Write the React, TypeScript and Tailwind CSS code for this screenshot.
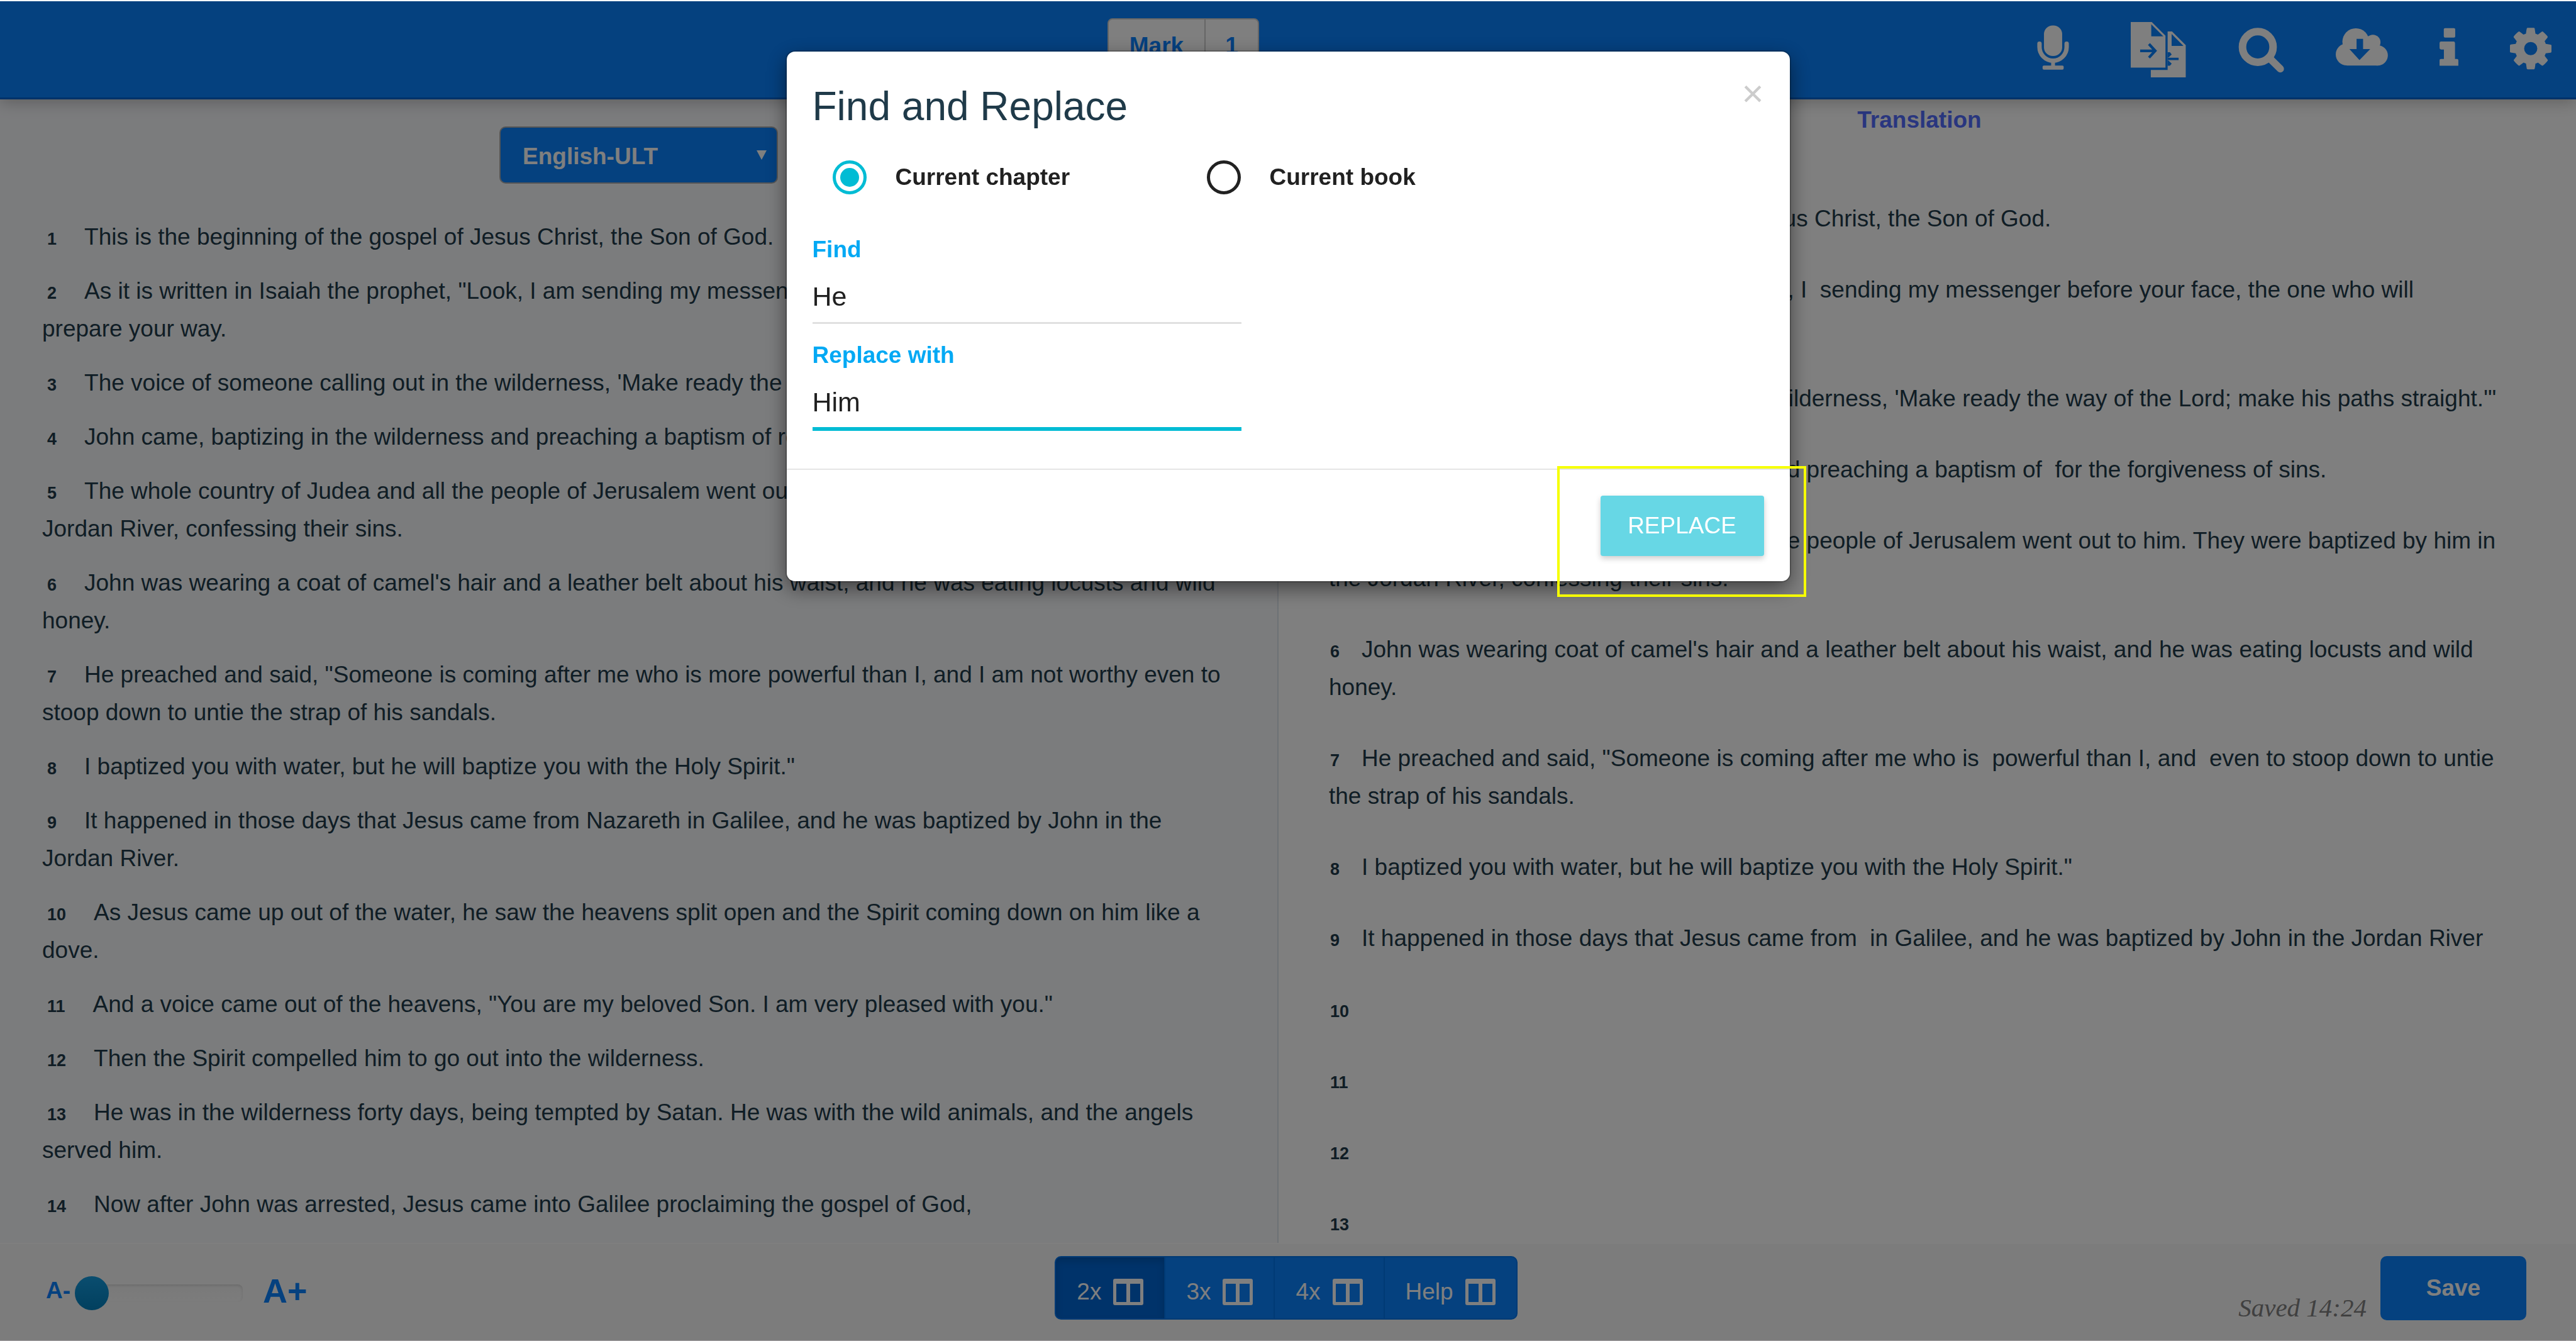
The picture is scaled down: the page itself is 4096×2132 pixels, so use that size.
import React from "react";

type Verse = { n: number; text: string };

const SOURCE: Verse[] = [
  { n: 1, text: "This is the beginning of the gospel of Jesus Christ, the Son of God." },
  { n: 2, text: "As it is written in Isaiah the prophet, \"Look, I am sending my messenger before your face, who will\nprepare your way." },
  { n: 3, text: "The voice of someone calling out in the wilderness, 'Make ready the way of the Lord; make his paths straight.'\"" },
  { n: 4, text: "John came, baptizing in the wilderness and preaching a baptism of repentance for the forgiveness of sins." },
  { n: 5, text: "The whole country of Judea and all the people of Jerusalem went out to him. They were baptized by him in the Jordan River, confessing their sins." },
  { n: 6, text: "John was wearing a coat of camel's hair and a leather belt about his waist, and he was eating locusts and wild honey." },
  { n: 7, text: "He preached and said, \"Someone is coming after me who is more powerful than I, and I am not worthy even to stoop down to untie the strap of his sandals." },
  { n: 8, text: "I baptized you with water, but he will baptize you with the Holy Spirit.\"" },
  { n: 9, text: "It happened in those days that Jesus came from Nazareth in Galilee, and he was baptized by John in the Jordan River." },
  { n: 10, text: "As Jesus came up out of the water, he saw the heavens split open and the Spirit coming down on him like a dove." },
  { n: 11, text: "And a voice came out of the heavens, \"You are my beloved Son. I am very pleased with you.\"" },
  { n: 12, text: "Then the Spirit compelled him to go out into the wilderness." },
  { n: 13, text: "He was in the wilderness forty days, being tempted by Satan. He was with the wild animals, and the angels served him." },
  { n: 14, text: "Now after John was arrested, Jesus came into Galilee proclaiming the gospel of God," },
];

const TARGET: Verse[] = [
  { n: 1, text: "This is the beginning of the gospel of Jesus Christ, the Son of God." },
  { n: 2, text: "As it is written in Isaiah the prophet \"Look, I  sending my messenger before your face, the one who will\nprepare your way." },
  { n: 3, text: "The voice of someone calling out in the wilderness, 'Make ready the way of the Lord; make his paths straight.'\"" },
  { n: 4, text: "John came baptizing in the wilderness and preaching a baptism of  for the forgiveness of sins." },
  { n: 5, text: "The whole country of Judea  and  all of the people of Jerusalem went out to him. They were baptized by him in\nthe Jordan River, confessing their sins." },
  { n: 6, text: "John was wearing coat of camel's hair and a leather belt about his waist, and he was eating locusts and wild\nhoney." },
  { n: 7, text: "He preached and said, \"Someone is coming after me who is  powerful than I, and  even to stoop down to untie\nthe strap of his sandals." },
  { n: 8, text: "I baptized you with water, but he will baptize you with the Holy Spirit.\"" },
  { n: 9, text: "It happened in those days that Jesus came from  in Galilee, and he was baptized by John in the Jordan River" },
  { n: 10, text: "" },
  { n: 11, text: "" },
  { n: 12, text: "" },
  { n: 13, text: "" },
];

function MicIcon() {
  return (
    <svg viewBox="75 102 300 525" className="h-[90px] w-[51px]" fill="currentColor" aria-hidden="true">
      <rect x="140" y="138" width="170" height="286" rx="82" />
      <path d="M98 308V340a127 127 0 0 0 254 0V308" fill="none" stroke="currentColor" strokeWidth="41" strokeLinecap="round" />
      <rect x="207" y="470" width="36" height="50" />
      <rect x="127" y="513" width="197" height="38" rx="12" />
    </svg>
  );
}

function ImportFilesIcon() {
  return (
    <svg viewBox="939 102 525 525" className="h-[90px] w-[90px]" aria-hidden="true">
      <path d="M1287 195H1328L1455 322V621H1131V552H1287Z" fill="currentColor" />
      <path d="M1324 218V329H1434Z" fill="#0a82ff" />
      <path d="M1287 388H1308L1325 408L1298 434L1287 438ZM1287 462L1298 468L1325 494L1308 513H1287Z" fill="#0a82ff" />
      <path d="M1287 450H1389" stroke="#0a82ff" strokeWidth="22" />
      <path d="M945 108H1140L1267 235V531H945Z" fill="currentColor" />
      <path d="M1135 128V240H1247Z" fill="#0a82ff" />
      <path d="M1032 375H1165M1114 312L1172 375L1114 438" fill="none" stroke="#0a82ff" strokeWidth="25" />
    </svg>
  );
}

function SearchIcon() {
  return (
    <svg viewBox="90 102 426 525" className="h-[90px] w-[73px]" fill="none" stroke="currentColor" aria-hidden="true">
      <circle cx="271" cy="339" r="142" strokeWidth="70" />
      <path d="M385 448L480 542" strokeWidth="68" strokeLinecap="round" />
    </svg>
  );
}

function CloudDownloadIcon() {
  return (
    <svg viewBox="1002 102 489 525" className="h-[90px] w-[83px]" fill="currentColor" aria-hidden="true">
      <circle cx="1105" cy="409" r="103" />
      <circle cx="1190" cy="290" r="126" />
      <circle cx="1350" cy="295" r="71" />
      <circle cx="1395" cy="418" r="95" />
      <rect x="1105" y="300" width="290" height="213" />
      <path d="M1197 263H1258V358H1325L1224 462L1130 358H1197Z" fill="#0a82ff" />
    </svg>
  );
}

function InfoIcon() {
  return (
    <svg viewBox="285 102 174 525" className="h-[90px] w-[30px]" fill="currentColor" aria-hidden="true">
      <rect x="324" y="164" width="106" height="88" rx="12" />
      <path d="M299 289H414q14 0 14 14V450H447q12 0 12 12V513H285V462q0-12 12-12H325V363H299q-14 0-14-14V303q0-14 14-14Z" />
    </svg>
  );
}

function CogIcon() {
  return (
    <svg viewBox="128 -108 1536 2090" className="h-[90px] w-[66px]" fill="currentColor" aria-hidden="true">
      <path d="M1140 896q0-101-72-172t-172-72-172 72-72 172 72 172 172 72 172-72 72-172zM1664 787v222q0 12-8 23t-20 13l-185 28q-19 54-39 91 35 50 107 138 10 12 10 25t-9 23q-27 37-99 108t-94 71q-12 0-26-9l-138-108q-44 23-91 38-16 136-29 186-7 28-36 28h-222q-14 0-24.500-8.500t-11.500-21.500l-28-184q-49-16-90-37l-141 107q-10 9-25 9-14 0-25-11-126-114-165-168-7-10-7-23 0-12 8-23 15-21 51-66.500t54-70.500q-27-50-41-99l-183-27q-13-2-21-12.500t-8-23.500v-222q0-12 8-23t19-13l186-28q14-46 39-92-40-57-107-138-10-12-10-24 0-10 9-23 26-36 98.500-107.500t94.500-71.500q13 0 26 10l138 107q44-23 91-38 16-136 29-186 7-28 36-28h222q14 0 24.500 8.500t11.500 21.500l28 184q49 16 90 37l142-107q9-9 24-9 13 0 25 10 129 119 165 170 7 8 7 22 0 12-8 23-15 21-51 66.500t-54 70.500q26 50 41 98l183 28q13 2 21 12.500t8 23.500z" />
    </svg>
  );
}

function ColumnsIcon() {
  return (
    <svg viewBox="0 0 48 42" className="h-[42px] w-[48px]" aria-hidden="true">
      <path
        fillRule="evenodd"
        fill="currentColor"
        d="M3 0H45Q48 0 48 3V39Q48 42 45 42H3Q0 42 0 39V3Q0 0 3 0ZM5 8V37H21V8ZM27 8V37H43V8Z"
      />
    </svg>
  );
}

function Header() {
  const actions = [
    { label: "Record", icon: <MicIcon />, cls: "mr-[15px]" },
    { label: "Import files", icon: <ImportFilesIcon />, cls: "" },
    { label: "Search", icon: <SearchIcon />, cls: "" },
    { label: "Download", icon: <CloudDownloadIcon />, cls: "" },
    { label: "Information", icon: <InfoIcon />, cls: "" },
    { label: "Settings", icon: <CogIcon />, cls: "" },
  ];
  return (
    <header className="relative z-10 flex h-[158px] shrink-0 items-start justify-between border-b-3 border-[#0064d2] bg-[#0a82ff] pr-[39px] shadow-[0_4px_24px_rgba(0,0,0,0.25)]">
      <div className="mt-[29px] ml-[43.4%] flex h-[86px] overflow-hidden rounded-lg border-2 border-[#cccccc] bg-white text-[37px] leading-[84px] font-bold text-[#0a82ff]">
        <button className="border-r-2 border-[#cccccc] px-[33px]">Mark</button>
        <button className="px-[31px]">1</button>
      </div>
      <nav className="mt-[34px] flex gap-[82px] text-white">
        {actions.map((a) => (
          <button key={a.label} aria-label={a.label} className={a.cls}>
            {a.icon}
          </button>
        ))}
      </nav>
    </header>
  );
}

function SourcePane() {
  return (
    <section className="flex w-[2033px] shrink-0 flex-col border-r-2 border-[#dbe2ea] bg-[#f7f8fb] pt-[43px] pr-[67px] pl-[67px]">
      <div className="relative w-[443px] self-center">
        <select
          aria-label="Source text"
          className="h-[91px] w-full appearance-none rounded-[10px] border-2 border-[#adadad] bg-[#0a82ff] pt-1 pl-[35px] text-[37px] font-bold text-white"
        >
          <option>English-ULT</option>
        </select>
        <svg viewBox="0 0 16 15" className="pointer-events-none absolute top-[38px] right-[18px] h-[15px] w-[16px]" aria-hidden="true">
          <path d="M0 0H16L8 15Z" fill="#ffffff" />
        </svg>
      </div>
      <div className="mt-[55px] flex flex-col gap-[26px]">
        {SOURCE.map((v) => (
          <p key={v.n} className="whitespace-pre-line">
            <b className="mr-[44px] ml-[8px] text-[27px] leading-none">{v.n}</b>
            {v.text}
          </p>
        ))}
      </div>
    </section>
  );
}

function TranslationPane() {
  return (
    <section className="flex min-w-0 flex-1 flex-col bg-white pt-[3px] pr-[105px] pl-[80px]">
      <h2 className="text-center font-bold text-[#536dfe]">Translation</h2>
      <div className="mt-[97px] flex flex-col gap-[53px]">
        {TARGET.map((v) => (
          <p key={v.n} className="whitespace-pre">
            <b className="mr-[35px] ml-[2px] text-[27px] leading-none">{v.n}</b>
            {v.text}
          </p>
        ))}
      </div>
    </section>
  );
}

function Footer() {
  const layouts = ["2x", "3x", "4x", "Help"];
  return (
    <footer className="grid h-[156px] shrink-0 grid-cols-[1fr_auto_1fr] items-start border-t-2 border-white bg-[#f8f8f8] pt-[19px] pr-[79px] pl-[73px]">
      <div className="flex h-[118px] items-center font-bold text-[#0a82ff]">
        <label htmlFor="font-size" className="pb-2">A-</label>
        <input
          id="font-size"
          type="range"
          min={0}
          max={10}
          defaultValue={0}
          className="ml-[7px] h-[54px] w-[267px] appearance-none bg-transparent [&::-webkit-slider-runnable-track]:h-[28px] [&::-webkit-slider-runnable-track]:rounded-lg [&::-webkit-slider-runnable-track]:bg-linear-to-b [&::-webkit-slider-runnable-track]:from-[#f3f3f3] [&::-webkit-slider-runnable-track]:to-[#f9f9f9] [&::-webkit-slider-runnable-track]:shadow-[inset_0_2px_4px_rgba(0,0,0,0.12)] [&::-webkit-slider-thumb]:mt-[-13px] [&::-webkit-slider-thumb]:size-[54px] [&::-webkit-slider-thumb]:appearance-none [&::-webkit-slider-thumb]:rounded-full [&::-webkit-slider-thumb]:bg-linear-to-b [&::-webkit-slider-thumb]:from-[#149bdf] [&::-webkit-slider-thumb]:to-[#0480be]"
        />
        <span className="ml-[32px] pb-2 text-[54px]">A+</span>
      </div>
      <div className="flex h-[101px] overflow-hidden rounded-[10px] border-2 border-[#0074ea] bg-[#0a82ff] text-white">
        {layouts.map((l, i) => (
          <button
            key={l}
            className={
              i === 0
                ? "flex items-center gap-[19px] bg-[#0066d4] px-[33px] pt-3 shadow-[inset_0_6px_12px_rgba(0,0,0,0.15)]"
                : "flex items-center gap-[19px] border-l-2 border-[#0074ea] px-[33px] pt-3"
            }
          >
            <span className="leading-[42px]">{l}</span>
            <ColumnsIcon />
          </button>
        ))}
      </div>
      <div className="flex items-end justify-end gap-[22px]">
        <span className="font-['Liberation_Serif',serif] text-[41px] leading-[40px] text-[#808080] italic">Saved 14:24</span>
        <button className="h-[102px] w-[232px] rounded-[10px] bg-[#0a82ff] font-bold text-white">Save</button>
      </div>
    </footer>
  );
}

function ScopeOption({ label, checked }: { label: string; checked?: boolean }) {
  return (
    <label className="flex w-[595px] items-center gap-[46px] font-bold text-[#212121]">
      <input
        type="radio"
        name="scope"
        defaultChecked={checked}
        className="grid size-[54px] appearance-none place-content-center rounded-full border-5 border-[#212121] before:size-[30px] before:rounded-full checked:border-[#00bcd4] checked:before:bg-[#00bcd4]"
      />
      {label}
    </label>
  );
}

function FindReplaceDialog() {
  return (
    <div
      role="dialog"
      aria-labelledby="dialog-title"
      className="w-[1595px] rounded-[13px] bg-white shadow-[0_0_0_2px_rgba(0,0,0,0.2),0_11px_32px_rgba(0,0,0,0.5)]"
    >
      <div className="px-[41px] pt-[52px]">
        <div className="flex items-start justify-between">
          <h1 id="dialog-title" className="text-[64px] leading-[70px] text-[#1f3a49]">Find and Replace</h1>
          <button aria-label="Close" className="text-[60px] leading-[30px] text-[#cccccc]">×</button>
        </div>
        <div className="mt-[48px] flex pl-[32px]">
          <ScopeOption label="Current chapter" checked />
          <ScopeOption label="Current book" />
        </div>
        <div className="mt-[65px] flex w-[682px] flex-col pb-[60px]">
          <label htmlFor="find" className="leading-[40px] font-bold text-[#03a9f4]">Find</label>
          <input id="find" defaultValue="He" className="mt-[14px] h-[84px] border-b-3 border-[#e0e0e0] text-[43px] text-[#212121] outline-none" />
          <label htmlFor="replace" className="mt-[30px] leading-[40px] font-bold text-[#03a9f4]">Replace with</label>
          <input id="replace" defaultValue="Him" className="mt-[14px] h-[86px] border-b-6 border-[#00bcd4] text-[43px] text-[#212121] outline-none" />
        </div>
      </div>
      <div className="flex justify-end border-t-2 border-[#e5e5e5] pt-[41px] pr-[41px] pb-[40px]">
        <div className="relative">
          <button className="block h-[96px] w-[260px] rounded-[4px] bg-[#67d7e5] text-white shadow-[0_4px_10px_rgba(0,0,0,0.2)]">REPLACE</button>
          <div className="pointer-events-none absolute -top-[47px] -right-[67px] -bottom-[65px] -left-[69px] border-4 border-[#f6ff00]" />
        </div>
      </div>
    </div>
  );
}

export default function App() {
  return (
    <div className="h-screen overflow-hidden bg-white font-['Liberation_Sans',Arial,sans-serif] text-[37px] leading-[60px] text-[#213b4a]">
      <div className="flex h-full flex-col">
        <Header />
        <main className="flex min-h-0 flex-1 overflow-hidden">
          <SourcePane />
          <TranslationPane />
        </main>
        <Footer />
      </div>
      <div className="fixed inset-0 z-20 flex items-start justify-center border-t-2 border-b border-t-white border-b-[#a39fa3] bg-black/50 bg-clip-padding pt-[80px]">
        <FindReplaceDialog />
      </div>
    </div>
  );
}
